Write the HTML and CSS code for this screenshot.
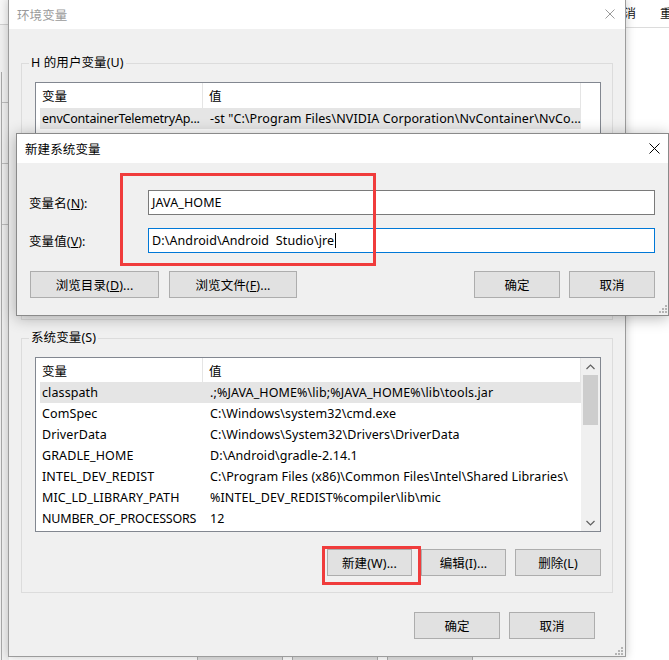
FILE: index.html
```html
<!DOCTYPE html>
<html lang="zh-CN">
<head>
<meta charset="utf-8">
<title>环境变量</title>
<link rel="stylesheet" href="styles.css">
</head>
<body>
<div class="desktop">
  <div class="bg-left">
    <div class="bgl-top"></div>
    <div class="bgl-rest">
      <div class="bgl-mark m-a"></div>
      <div class="bgl-mark m-b"></div>
      <div class="bgl-mark m-c"></div>
    </div>
  </div>
  <div class="bg-top"><span>取消</span><span>重置</span></div>
  <div class="bg-bottom"><span class="bg-btn"></span><span class="bg-btn"></span><span class="bg-btn"></span></div>

  <section class="win main">
    <header class="titlebar">
      <span class="title inactive">环境变量</span>
      <svg class="close" width="10" height="10" viewBox="0 0 10 10"><path d="M0.5 0.5L9.5 9.5M9.5 0.5L0.5 9.5" stroke="#9a9a9a" stroke-width="1" fill="none"/></svg>
    </header>
    <div class="body">
      <fieldset class="group user">
        <legend>H 的用户变量(U)</legend>
        <div class="list user-list">
          <div class="list-main">
            <div class="lhead"><span class="hc c1">变量</span><span class="hc c2">值</span></div>
            <div class="row sel"><span class="c1 tight">envContainerTelemetryAp...</span><span class="c2">-st "C:\Program Files\NVIDIA Corporation\NvContainer\NvCo...</span></div>
          </div>
          <div class="noscroll"></div>
        </div>
      </fieldset>

      <fieldset class="group sys">
        <legend>系统变量(S)</legend>
        <div class="list sys-list">
          <div class="list-main">
            <div class="lhead sh"><span class="hc c1">变量</span><span class="hc c2">值</span></div>
            <div class="row sel"><span class="c1">classpath</span><span class="c2">.;%JAVA_HOME%\lib;%JAVA_HOME%\lib\tools.jar</span></div>
            <div class="row"><span class="c1">ComSpec</span><span class="c2">C:\Windows\system32\cmd.exe</span></div>
            <div class="row"><span class="c1">DriverData</span><span class="c2">C:\Windows\System32\Drivers\DriverData</span></div>
            <div class="row"><span class="c1">GRADLE_HOME</span><span class="c2">D:\Android\gradle-2.14.1</span></div>
            <div class="row"><span class="c1">INTEL_DEV_REDIST</span><span class="c2">C:\Program Files (x86)\Common Files\Intel\Shared Libraries\</span></div>
            <div class="row"><span class="c1">MIC_LD_LIBRARY_PATH</span><span class="c2">%INTEL_DEV_REDIST%compiler\lib\mic</span></div>
            <div class="row"><span class="c1 tight">NUMBER_OF_PROCESSORS</span><span class="c2">12</span></div>
          </div>
          <div class="scroll">
            <div class="sbtn"><svg width="9" height="6" viewBox="0 0 9 6"><path d="M0.5 5L4.5 1L8.5 5" stroke="#606060" stroke-width="1.2" fill="none"/></svg></div>
            <div class="thumb"></div>
            <div class="track"></div>
            <div class="sbtn"><svg width="9" height="6" viewBox="0 0 9 6"><path d="M0.5 1L4.5 5L8.5 1" stroke="#606060" stroke-width="1.2" fill="none"/></svg></div>
          </div>
        </div>
        <div class="btnrow">
          <button class="btn w85">新建(W)...</button>
          <button class="btn w85">编辑(I)...</button>
          <button class="btn w86">删除(L)</button>
        </div>
      </fieldset>

      <div class="footer">
        <button class="btn w86">确定</button>
        <button class="btn w86">取消</button>
      </div>
      <svg class="grip" width="8" height="8" viewBox="0 0 8 8"><g fill="#b4b4b4"><rect x="6" y="0" width="2" height="2"/><rect x="3" y="3" width="2" height="2"/><rect x="6" y="3" width="2" height="2"/><rect x="0" y="6" width="2" height="2"/><rect x="3" y="6" width="2" height="2"/><rect x="6" y="6" width="2" height="2"/></g></svg>
    </div>
  </section>

  <section class="win dialog">
    <header class="titlebar">
      <span class="title">新建系统变量</span>
      <svg class="close" width="11" height="11" viewBox="0 0 11 11"><path d="M0.5 0.5L10.5 10.5M10.5 0.5L0.5 10.5" stroke="#000" stroke-width="1" fill="none"/></svg>
    </header>
    <div class="dbody">
      <div class="frow"><span class="flabel">变量名(<u>N</u>):</span><div class="input">JAVA_HOME</div></div>
      <div class="frow"><span class="flabel">变量值(<u>V</u>):</span><div class="input focus">D:\Android\Android  Studio\jre<span class="caret"></span></div></div>
      <div class="dbtns">
        <button class="btn w129">浏览目录(<u>D</u>)...</button>
        <button class="btn w128">浏览文件(<u>F</u>)...</button>
        <span class="spacer"></span>
        <button class="btn w86">确定</button>
        <button class="btn w86">取消</button>
      </div>
      <svg class="grip dgrip" width="8" height="8" viewBox="0 0 8 8"><g fill="#b4b4b4"><rect x="6" y="0" width="2" height="2"/><rect x="3" y="3" width="2" height="2"/><rect x="6" y="3" width="2" height="2"/><rect x="0" y="6" width="2" height="2"/><rect x="3" y="6" width="2" height="2"/><rect x="6" y="6" width="2" height="2"/></g></svg>
    </div>
  </section>

  <div class="mark m1"></div>
  <div class="mark m2"></div>
</div>
</body>
</html>
```
FILE: styles.css
```css
* { box-sizing: border-box; }
html, body { margin: 0; padding: 0; }
body {
  width: 669px;
  height: 660px;
  overflow: hidden;
  background: #fff;
  font-family: "Noto Sans", "Noto Sans CJK SC", sans-serif;
  font-size: 12.5px;
  letter-spacing: 0.1px;
  color: #000;
}
.desktop { position: relative; width: 669px; height: 660px; overflow: hidden; }

/* background windows */
.bg-left {
  position: absolute; left: 0; top: 0; width: 9px; height: 660px;
  display: flex; flex-direction: column; background: #f0f0f0;
}
.bgl-top { height: 25px; background: #f7f7f7; border-bottom: 1px solid #d0d0d0; }
.bgl-rest {
  flex: 1; margin-top: 47px; border-left: 1px solid #a8a8a8; margin-left: 1px;
  display: flex; flex-direction: column; gap: 60px; padding-top: 30px;
}
.bgl-mark { height: 1px; background: #bdbdbd; }
.bg-top {
  position: absolute; left: 600px; top: 0; width: 69px; height: 28px;
  border-bottom: 1px solid #dcdcdc; display: flex; align-items: center;
  gap: 24px; padding-left: 12px; padding-bottom: 2px; white-space: nowrap; color: #111;
  font-size: 12px; letter-spacing: 0;
}
.bg-bottom { position: absolute; left: 197px; top: 656px; display: flex; gap: 9px; }
.bg-btn { width: 86px; height: 6px; background: #e1e1e1; border: 1px solid #adadad; }

/* windows */
.win { position: absolute; background: #f0f0f0; display: flex; flex-direction: column; }
.main {
  left: 8px; top: -1px; width: 618px; height: 658px;
  border: 1px solid #9c9c9c; box-shadow: 0 0 9px rgba(0,0,0,.22);
}
.titlebar {
  height: 29px; flex: none; background: #fff;
  display: flex; align-items: center; padding: 0 10px 1px 8px;
}
.title { flex: 1; }
.inactive { color: #9a9a9a; }
.body { flex: 1; display: flex; flex-direction: column; position: relative; }

.group {
  margin: 0 0 0 12px; width: 592px; min-width: 0;
  border: 1px solid #dcdcdc; padding: 11px 11px 8px 13px;
}
.group legend { padding: 0 2px; margin-left: -6px; line-height: 16px; }
.user { margin-top: 26px; }
.sys { margin-top: 10px; padding-bottom: 16px; }

.list { display: flex; width: 566px; border: 1px solid #828790; background: #fff; }
.user-list { height: 229px; }
.sys-list { height: 175px; }
.list-main { width: 545px; flex: none; }
.noscroll { flex: 1; }
.lhead { display: flex; height: 25px; }
.lhead.sh { height: 24px; }
.hc { display: flex; align-items: center; border-right: 1px solid #e5e5e5; padding-left: 6px; }
.hc.c1 { width: 167px; }
.hc.c2 { width: 378px; padding-left: 6px; }
.row { display: flex; align-items: center; height: 21px; margin-left: 4px; width: 541px; white-space: nowrap; }
.row .c1 { width: 163px; padding-left: 2px; overflow: hidden; flex: none; }
.row .c2 { flex: 1; padding-left: 7px; overflow: hidden; }
.row .tight { letter-spacing: -0.2px; }
.row.sel { background: #e5e5e5; }

.scroll { flex: 1; background: #f0f0f0; display: flex; flex-direction: column; }
.sbtn { height: 17px; display: flex; align-items: center; justify-content: center; }
.thumb { height: 50px; margin: 0 2px; background: #cdcdcd; }
.track { flex: 1; }

.btn {
  height: 27px; border: 1px solid #adadad; background: #e1e1e1;
  font: inherit; letter-spacing: inherit; color: #000; padding: 0; margin: 0;
}
.w85 { width: 85px; }
.w86 { width: 86px; }
.w128 { width: 128px; }
.w129 { width: 129px; }
.btnrow { display: flex; justify-content: flex-end; gap: 9px; margin-top: 17px; }
.footer { display: flex; justify-content: flex-end; gap: 9px; margin-top: 19px; padding-right: 30px; }
.grip { position: absolute; right: 2px; bottom: 1px; }

/* dialog */
.dialog {
  left: 16px; top: 133px; width: 653px; height: 183px;
  border: 1px solid #8a8a8a; box-shadow: 0 2px 14px rgba(0,0,0,.3);
}
.dialog .titlebar { padding: 0 8px 1px 8px; }
.dbody { flex: 1; padding: 27px 13px 17px 12px; display: flex; flex-direction: column; position: relative; }
.frow { display: flex; align-items: center; height: 25px; }
.frow + .frow { margin-top: 13px; }
.flabel { width: 119px; flex: none; }
.input {
  flex: 1; height: 25px; border: 1px solid #7a7a7a; background: #fff;
  padding-left: 3px; display: flex; align-items: center; white-space: pre;
}
.input.focus { border-color: #0078d7; }
.caret { display: inline-block; width: 1px; height: 15px; background: #000; margin-left: 1px; }
.dbtns { display: flex; gap: 10px; margin-top: 18px; padding-left: 1px; }
.dbtns .spacer { flex: 1; }
.dbtns .w86 + .w86 { margin-left: -1px; }
.dgrip { right: 1px; bottom: 2px; }

/* annotations */
.mark { position: absolute; border: 3px solid #f03c3c; }
.m1 { left: 120px; top: 173px; width: 256px; height: 93px; }
.m2 { left: 322px; top: 546px; width: 99px; height: 39px; }
```
